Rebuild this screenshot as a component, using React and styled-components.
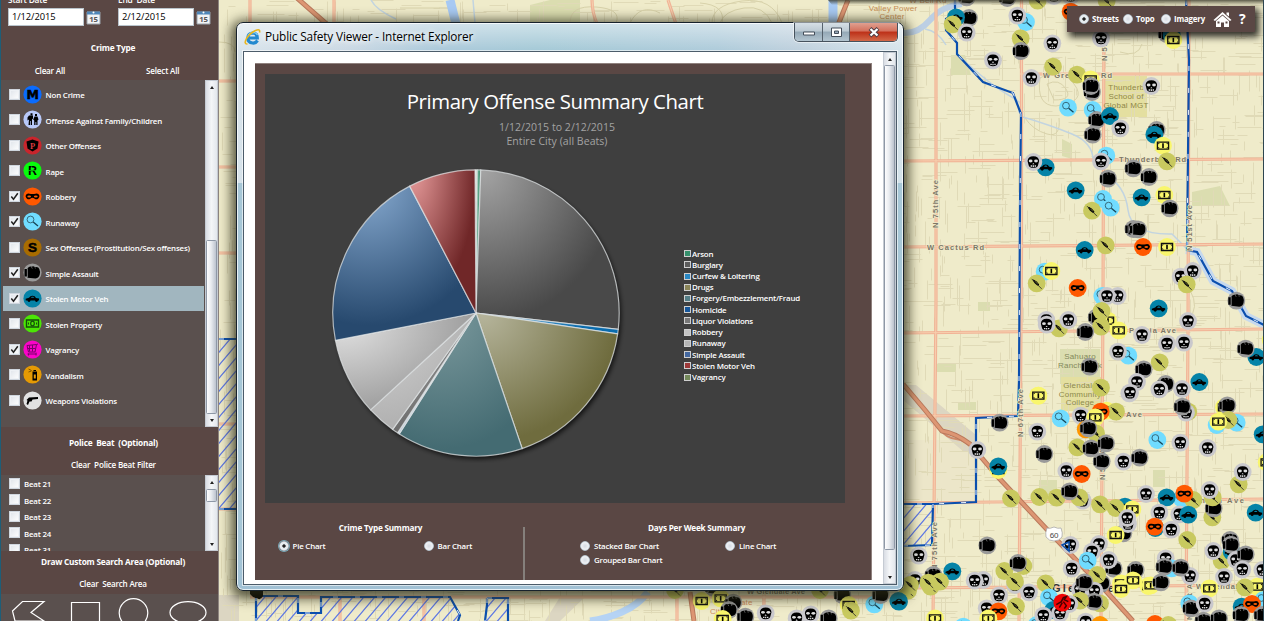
import React from "react";
import styled, { createGlobalStyle, css } from "styled-components";

const Global = createGlobalStyle`
  * { box-sizing: border-box; }
  body { margin: 0; background: #efebca; overflow: hidden; }
`;

const ui = `"Open Sans", "Noto Sans", sans-serif`;
const brown = "#5a4744";
const slate = "#5a504e";

const Screen = styled.div`
  position: relative;
  width: 1264px;
  height: 621px;
  overflow: hidden;
  font: 600 7.9px/12px ${ui};
  letter-spacing: -0.2px;
  color: #fff;
  white-space: pre;
`;
const MapLayer = styled.svg`
  position: absolute;
  inset: 0;
  width: 1264px;
  height: 621px;
`;

/* ---------- sidebar ---------- */
const Sidebar = styled.aside`
  position: relative;
  display: flex;
  flex-direction: column;
  width: 219px;
  height: 621px;
  background: ${brown};
  border-left: 1px solid #1d5e78;
  border-right: 1px solid #8d8580;
`;
const DateRow = styled.div`
  display: flex;
  height: 32px;
  padding-left: 7px;
  gap: 17px;
`;
const DateField = styled.div`
  width: 93px;
`;
const DateLabel = styled.div`
  height: 8px;
  line-height: 12px;
  margin-top: -6px;
  margin-bottom: 6px;
  font-size: 8.4px;
`;
const DateLine = styled.div`
  display: flex;
  align-items: center;
  gap: 2px;
`;
const DateInput = styled.div`
  width: 76px;
  height: 18px;
  padding-left: 3px;
  background: #fff;
  border: 1px solid #b9c4cc;
  color: #000;
  font: 400 9.4px/16px ${ui};
  letter-spacing: -0.1px;
`;
const Heading = styled.div`
  text-align: center;
  font-weight: 700;
  font-size: 8.3px;
  letter-spacing: -0.22px;
  padding-left: ${(p) => p.$shift || 7}px;
  height: ${(p) => p.$h}px;
  line-height: ${(p) => p.$h}px;
`;
const Actions = styled.div`
  display: flex;
  justify-content: center;
  gap: ${(p) => p.$gap || 0}px;
  height: 16px;
  line-height: ${(p) => p.$lh || 14}px;
  padding-right: ${(p) => p.$pull || 0}px;
  padding-left: ${(p) => p.$shift || 0}px;
  font-size: 8.1px;
`;
const DrawActions = styled(Actions)`
  height: 21px;
`;
const ListBox = styled.div`
  display: flex;
  flex: none;
  height: ${(p) => p.$h}px;
  background: ${slate};
`;
const Items = styled.div`
  flex: 1;
  overflow: hidden;
  padding-top: ${(p) => p.$top}px;
  padding-left: 2px;
`;
const Row = styled.div`
  display: flex;
  align-items: center;
  height: ${(p) => (p.$small ? 16.5 : 25.5)}px;
  margin-right: 1px;
  padding-left: 6px;
  gap: ${(p) => (p.$small ? 4 : 3.3)}px;
  ${(p) => p.$selected && css`background: #a1b6bf;`}
`;
const RowLabel = styled.span`
  padding-top: 1.5px;
`;
const Check = styled.span`
  width: 11px;
  height: 11px;
  flex: none;
  background: linear-gradient(135deg, #dfe4ea, #fff);
  border: 1px solid #cfd6de;
  box-shadow: inset 0 0 0 1px #eef1f5;
  display: flex;
  svg { width: 9px; height: 9px; }
`;
const RowIcon = styled.svg`
  width: 19px;
  height: 19px;
  flex: none;
`;
const Scroll = styled.div`
  width: 13px;
  flex: none;
  display: flex;
  flex-direction: column;
  background: linear-gradient(90deg, #d9dde4, #f4f6f8 50%, #e3e7ec);
  border: 1px solid #c5cbd3;
`;
const Arrow = styled.div`
  height: 12px;
  flex: none;
  display: flex;
  align-items: center;
  justify-content: center;
  &::before {
    content: "";
    border: 2.5px solid transparent;
    border-top-width: ${(p) => (p.$up ? 0 : 3)}px;
    border-bottom-width: ${(p) => (p.$up ? 3 : 0)}px;
    border-${(p) => (p.$up ? "bottom" : "top")}-color: #222;
  }
`;
const Thumb = styled.div`
  height: ${(p) => p.$h}px;
  margin-top: ${(p) => p.$top}px;
  margin-bottom: auto;
  background: linear-gradient(90deg, #fdfdfe, #e9ecf0 45%, #bcc3ce);
  border: 1px solid #8e98a6;
  border-radius: 1.5px;
`;
const DrawTools = styled.div`
  flex: 1;
  background: ${slate};
  overflow: hidden;
`;

/* ---------- dialog window ---------- */
const Win = styled.section`
  position: absolute;
  left: 236px;
  top: 22px;
  width: 668px;
  height: 569px;
  border: 1.5px solid #17222c;
  border-radius: 7px;
  padding: 0 6px 5px 6px;
  display: flex;
  flex-direction: column;
  background:
    linear-gradient(180deg, rgba(255,255,255,.5), rgba(255,255,255,.02) 30px),
    linear-gradient(180deg, transparent 0 160px, #a5c6d6 160px 500px, #9fc0d4),
    linear-gradient(90deg, #d6e2ea 0, #c7d6e2 110px, #a6c6d8 200px, #9fc6d4 300px, #a9c8d8 480px, #bacddb 560px, #d3e2ea);
  box-shadow: inset 0 0 0 1px rgba(255,255,255,.75), 0 3px 12px 5px rgba(40,40,20,.75);
`;
const TitleBar = styled.header`
  display: flex;
  height: 28px;
  padding-left: 1px;
  flex: none;
`;
const TitleText = styled.h1`
  margin: 0;
  padding-left: 4px;
  padding-top: 6px;
  flex: 1;
  font: 400 11.8px/14px ${ui};
  letter-spacing: -0.14px;
  color: #000;
  text-shadow: 0 0 6px #fff, 0 0 6px #fff;
`;
const WinButtons = styled.div`
  display: flex;
  height: 19px;
  margin-right: -1px;
  border: 1px solid #46525d;
  border-top: 0;
  border-radius: 0 0 5px 5px;
  overflow: hidden;
  box-shadow: 0 0 0 1px rgba(255,255,255,.5);
`;
const WinButton = styled.span`
  width: ${(p) => p.$w}px;
  display: flex;
  align-items: center;
  justify-content: center;
  border-right: 1px solid #56626d;
  background: linear-gradient(180deg, #d6dfe6, #bccad3 45%, #94a8b6 50%, #b3c5d0);
  &:last-child {
    border-right: 0;
    background: linear-gradient(180deg, #e0a090, #d4705c 45%, #bd3018 50%, #d26848);
  }
`;
const Client = styled.div`
  flex: 1;
  display: flex;
  min-height: 0;
  background: #fff;
  border: 1px solid #4c5c6a;
  box-shadow: 0 0 0 1px rgba(255,255,255,.6);
`;
const Page = styled.div`
  flex: 1;
  padding: 11px 11px 4px 11px;
`;
const Report = styled.div`
  height: 100%;
  padding: 9.500px 26px 0 10px;
  background: ${brown};
  border-top: 1px solid #8f817e;
  border-right: 1px solid #8f817e;
`;
const Chart = styled.div`
  height: 429px;
  background: #3f3f3f;
  padding-top: 12px;
`;
const ChartTitle = styled.h2`
  margin: 0;
  text-align: center;
  font: 400 20.4px/30px ${ui};
  letter-spacing: -0.42px;
`;
const ChartSub = styled.p`
  margin: 0;
  padding-top: 4px;
  padding-left: 4px;
  text-align: center;
  font: 400 10.5px/14px ${ui};
  letter-spacing: 0.05px;
  color: #a3a3a3;
`;
const ChartBody = styled.div`
  display: flex;
  align-items: flex-start;
`;
const Pie = styled.svg`
  width: 300px;
  height: 300px;
  margin: 15.500px 0 0 60.500px;
  flex: none;
`;
const Legend = styled.ul`
  list-style: none;
  margin: 100.500px 0 0 58px;
  padding: 0;
`;
const LegendItem = styled.li`
  display: flex;
  align-items: center;
  gap: 1.5px;
  height: 11.23px;
`;
const Swatch = styled.i`
  width: 7px;
  height: 7px;
  border: 1px solid #cfcfcf;
  background: ${(p) => p.$c};
`;
const Options = styled.div`
  display: flex;
  padding-top: 24px;
  height: 77px;
`;
const OptionGroup = styled.div`
  width: ${(p) => p.$w}px;
  padding-left: ${(p) => p.$pad}px;
  ${(p) => p.$line && css`border-right: 2px solid #85807c;`}
`;
const OptionTitle = styled.div`
  width: ${(p) => p.$w}px;
  text-align: center;
  font-weight: 700;
  font-size: 8.2px;
  letter-spacing: -0.22px;
  height: 12px;
  line-height: 2px;
`;
const OptionGrid = styled.div`
  display: grid;
  grid-template-columns: 145px 100px;
  grid-auto-rows: 14px;
`;
const RadioLabel = styled.span`
  display: flex;
  align-items: center;
  gap: ${(p) => p.$gap || 4}px;
`;
const Radio = styled.i`
  width: 10px;
  height: 10px;
  flex: none;
  border-radius: 50%;
  border: 1px solid #b9c5cf;
  background: ${(p) => (p.$on ? "radial-gradient(circle, #222 0 1.3px, #dfe6ea 2px, #fff)" : "radial-gradient(circle, #d5dae2, #fff)")};
  box-shadow: ${(p) => (p.$on && p.$ring ? "0 0 0 1px #78a9b8" : "none")};
`;

/* ---------- map toolbar ---------- */
const Toolbar = styled.nav`
  position: absolute;
  left: 1067px;
  top: 6px;
  width: 188px;
  height: 26px;
  padding-left: 12px;
  display: flex;
  align-items: center;
  background: ${brown};
  box-shadow: 3px 4px 7px 1px rgba(0,0,0,.8);
  font-weight: 700;
  > span { width: 44px; }
  > span:nth-child(2) { width: 38px; }
  > span:nth-child(3) { width: 52px; }
`;
const Help = styled.b`
  font: 700 14px/16px ${ui};
  padding-left: 7px;
`;

/* ---------- incident symbols ---------- */
const colours = {
  s: "#c9c8cc", a: "#999", d: "#c8c95f", c: "#0583a7", r: "#70dcff", m: "#f9f66c",
  o: "#ff5800", h: "#f00404", v: "#ff9500", M: "#0a6cff", F: "#b8c8f8", P: "#c9252c",
  R: "#08fb0c", S: "#a86c00", p: "#4be605", V: "#fa04c8", n: "#e59a04", w: "#e2e2e2",
};
const letter = { fontFamily: "Liberation Sans", fontWeight: 700, textAnchor: "middle" };
const glyphs = {
  s: <><path d="M-5.800 -1Q-5.500 -5.800 0 -5.800Q5.500 -5.800 5.800 -1L4.600 3.500Q4 5.800 0 5.800Q-4 5.800 -4.600 3.500Z" /><g fill="#dededf"><ellipse cx="-2.700" cy="-1" rx="1.900" ry="1.400" /><ellipse cx="2.700" cy="-1" rx="1.900" ry="1.400" /><path d="M0 1l1.100 1.300h-2.200zM-2.700 3.300h1.500v1.400h-1.500zM-.6 3.300h1.200v1.600h-1.200zM1.300 3.300h1.400v1.400h-1.400z" /></g></>,
  a: <><path d="M-8 -3.500h2.600v7.500h-2.600zM-5 -4Q-3.500 -6.500 -1 -5.800Q1 -7 2.500 -5.300Q6 -6 6.800 -3.500Q8 -1 7.200 2Q6.500 5.500 3 6L-5 5.200Z" /><path d="M-5.200-3.500v8M-1-5.500l.8 1.600M2.500-5l.4 1" stroke="#999" strokeWidth=".6" fill="none" /></>,
  d: <><path d="M-4 -3L-3.200 -3.800L0 -1.800L2.400 .8L2.100 2.200L.6 2.200L-2 0Z" /><path d="M-5 -4.500L5 5.500" stroke="#222" strokeWidth=".8" /><path d="M-1.500-2l2.600 2.600" stroke="#8d8e3c" strokeWidth=".6" /></>,
  c: <><path d="M-6.800 .3L-3.500 -.8Q-2 -3 0 -2.800Q2.500 -2.800 3.500 -.6L6.500 0V2H-6.800Z" /><circle cx="-3.500" cy="2" r="1.400" /><circle cx="4" cy="2" r="1.400" /><path d="M-1.600-.7l.8-1.100h1.600l1 1.100z" fill="#0583a7" /></>,
  r: <><circle cx="-2" cy="-2" r="3.400" fill="none" stroke="#305c6c" strokeWidth=".9" /><path d="M.7 .5L5.500 4.500" stroke="#164557" strokeWidth="1.300" /></>,
  m: <><path d="M-5.600 -3.500H5.600V3.500H-5.600Z" fill="none" stroke="#111" strokeWidth="1.300" /><path d="M-.8-2.300h1.600v4.600h-1.600zM-4.700-2.600h1.500l-1.500 1.500zM4.700 2.600h-1.500l1.500-1.500zM4.700-2.600v1.500l-1.500-1.500zM-4.700 2.600v-1.500l1.500 1.500z" /></>,
  o: <><path d="M-7 -.5Q-6 -3.500 -3 -2.800Q0 -2 3 -2.800Q6 -3.500 7 -.5Q6 3.300 3 2.800L1 1.500Q0 1 -1 1.500L-3 2.800Q-6 3.300 -7 -.5Z" /><g fill="#ff5800"><ellipse cx="-3.300" rx="1.900" ry="1.100" /><ellipse cx="3.300" rx="1.900" ry="1.100" /></g></>,
  h: <path d="M-6 2L-1 -1L1 -5L4 -6L2 -3L6 -1M1 -1L4 3L2 6M0 0L-3 5" fill="none" stroke="#400" strokeWidth="1.500" />,
  v: <path d="M-3-3h5v8h-5z" />,
  M: <text y="4.600" fontSize="12.500" stroke="#000" strokeWidth=".5" {...letter} style={{ fontFamily: "DejaVu Sans" }}>M</text>,
  F: <><path d="M-2-6.200h2v2h-2zM2.500-5.500h2v2h-2zM-3.500-4h4v3l-1 1v5.500h-1.300v-4h-.7v4h-1.500l.5-5.500l-1.500 1v-3zM2-3h3l1 3l-1 1v4.500h-1.200v-3h-.8v3h-1.300v-4.500l-1-1z" /></>,
  P: <><path d="M-6 -4L-3 -5L0 -6L3 -5L6 -4L5 3L0 6L-5 3Z" /><text y="3" fontSize="8.500" fill="#d63a3f" {...letter} style={{ fontFamily: "Liberation Serif" }}>P</text></>,
  R: <><text y="4.500" fontSize="12.500" {...letter}>R</text><path d="M-4 0h7M-1-4v3" stroke="#08fb0c" strokeWidth=".7" /></>,
  S: <text y="4.800" fontSize="13.500" stroke="#000" strokeWidth=".5" {...letter}>S</text>,
  p: <><path d="M-6 -3.500H6V3.500H-6Z" fill="none" stroke="#14500a" strokeWidth="1.400" /><ellipse rx="1.800" ry="2.300" fill="none" stroke="#14500a" strokeWidth="1.200" /><path d="M-4.500 0h1M3.500 0h1" stroke="#14500a" strokeWidth="2" /></>,
  V: <path d="M-5.500 -4L4 -5L5.500 -5.500M4 -5L2.500 2.500H-4L-5.500 -4M-3 -4V2M0 -4.500V2M-5 -1H3M-5 4.500H4M-4 4v2M3.500 3v3" fill="none" stroke="#78006a" strokeWidth="1" />,
  n: <><path d="M0-3h4.500v9h-4.500zM1-4.500h2.500v1h-2.500z" /><path d="M1.300 0h2v4h-2z" fill="#e59a04" /><path d="M-1-4l-3-1.500M-1-3.500l-3 1" stroke="#664400" strokeWidth=".8" /></>,
  w: <path d="M-6 -.5L-3.500 -3L5.500 -3.500V-1.500L0 -1L-1 1L-3 1L-4.500 4.500L-6 3.500L-5 0Z" />,
};
const Pin = ({ t, x = 0, y = 0, r = 8.9 }) => (
  <g transform={`translate(${x} ${y})`}>
    <circle r={r} fill={colours[t]} />
    {glyphs[t]}
  </g>
);

/* Each sheet lists incidents as kind,x,y in thirds of a pixel from its origin. */
const sheets = [
  [900, 0, "a200,-8 a322,-6 d413,2 s462,-12 s512,-12 d620,3 o512,35 a207,54 c168,52 d158,73 s200,98 r378,66 s352,47 d362,115 a363,153 s457,130 s279,181 s603,115 s394,234 d459,200 d531,224 m572,238 a576,276 a573,258 s754,258 r504,323 r578,330 a590,360 c630,348 s661,385 a578,404 a770,390 c763,404 m789,437 d801,484 r619,467 s603,484 c437,502 s400,486 a700,505 a624,536 a747,531 c527,571 c725,592 m793,585 r609,597 r632,623 d576,632 a809,625 a800,102 c815,105 m820,120"],
  [900, 200, "a700,87 a714,88 o729,141 m801,141 c554,150 d617,136 r434,215 m454,213 d410,250 o533,264 r607,288 s653,288 s621,288 s842,230 s878,213 d860,253 a1009,302 c776,325 a590,352 m624,362 d605,333 d603,380 m656,391 s439,360 d477,385 s440,374 s505,360 a556,396 s726,405 s864,363 s801,431 s852,428 r685,467 s654,455 a569,500 d779,487 a731,508 s711,546 s688,580 a797,552 s778,568 s846,567 c898,546 m1112,420 c1069,471 a1037,446 d603,563 m415,587"],
  [900, 400, "m415,-13 s690,-22 r482,55 s542,47 m620,32 d648,35 o602,35 m586,52 v557,88 d588,100 a565,85 s412,95 a299,68 s232,150 m295,210 c295,199 d532,142 a573,145 a618,130 a605,184 s670,185 a719,173 a433,162 r772,120 s841,128 s923,144 d865,35 s858,38 a847,20 m972,22 a982,16 r1010,68 r950,75 d985,60 m955,65 c1088,103 m1100,187 d1016,253 s1028,216 s499,213 o545,222 d333,295 d418,291 d470,293 s548,302 d538,292 a509,274 d600,313 c675,320 d647,324 m697,328 a670,400 s684,372 s682,354 m647,405 s738,282 r845,295 d880,300 c800,292 o853,281 s778,338 s838,343 c865,344 c766,384 o764,380 s814,389 d862,420 d937,352 a941,325 d938,292 s929,270 c1067,338 a262,436 s56,467 c157,514 a100,525 s45,540 d92,560 d85,548 d120,545 s250,540 s224,542 d24,572 c-5,603 d313,513 d370,498 a354,489 s345,555 d345,545 d437,550 s387,577 s297,586 s260,625 o295,634 d348,619 s511,435 s597,432 s576,455 r563,482 s515,506 a641,506 s626,480 a707,510 m663,550 m699,541 m663,567 a605,550 d592,525 s583,572 s540,568 a553,547 d600,610 a582,605 d540,602 s508,612 r447,592 c460,630 s480,640 h487,608 r410,675 s430,647 s557,665 v600,675 m265,655 m105,655 r190,680 m745,558 m752,556 a783,547 s797,475 r815,505 a793,500 s870,528 a842,503 d965,483 c995,455 a990,420 a993,434 s1008,480 a1037,463 s940,453 s1027,508 s972,531 s1087,510 m928,565 m1072,560 d1035,562 r868,610 a873,625 s914,611 c1025,620 r1090,600 o1056,612 a1023,645 a910,662 a957,655 a1087,645 o765,672 d805,675"],
  [560, 490, "d345,300 d780,300 a460,293 m425,333 m482,325 a520,338 a507,360 m488,387 a556,380 s617,370 s710,385 s752,373 a806,385 a847,315 m866,345 d873,362 r943,343 a962,315 c1017,335 d1050,285"],
];
const pins = sheets.flatMap(([ox, oy, list]) =>
  list.split(" ").map((p) => {
    const [x, y] = p.slice(1).split(",").map(Number);
    return { t: p[0], x: ox + x / 3, y: oy + y / 3 };
  })
);

const minorStreets = (() => {
  let seed = 11;
  const rnd = () => (seed = (seed * 16807) % 2147483647) / 2147483647;
  let d = "";
  for (let x = 220; x < 1264; x += 21)
    for (let y = 0; y < 621; y += 21) {
      const n = 2 + Math.floor(rnd() * 3);
      for (let i = 0; i < n; i++) {
        const a = x + Math.round(rnd() * 18) + 0.5;
        const b = y + Math.round(rnd() * 18) + 0.5;
        const l = Math.round(6 + rnd() * 22);
        d += rnd() > 0.48 ? `M${a} ${b}h${l}` : `M${a} ${b}v${l}`;
      }
    }
  return d;
})();
const majors = "M936 0L936 300L933 621M1021.500 0V250L1019 621M1104 0L1103 300L1101 621M1189 0L1188 330L1186 621M1020 74H1264M903 161L1264 159M903 247L1264 244M903 333L1264 329M903 416L1264 414M903 503L1264 499M903 588L1264 585M219 81H237M219 167H237M219 253H237M219 424H237M250 0V23M334 0V23M592 0Q592 12 597 24M668 0L676 24M250 597H903M340 597V621M424 597V621M677 592V621M764 592V621M219 509H237";
const freeway = "M903 384L925 410L942 431Q955 433 970 444L998 477L1054 537L1105 590L1133 621M297 -2L330 27M848 0L838 25M690 592L694 621";
const freewayLoop = "M940 429Q946 438 956 439T974 451";
const beatLine = "M955 0V14L946 19V30L957 43V54L983 82L1013 93L1021 114L1020 205L1019 380L1018 416L976 418V502L933 504H903M1186 0L1189 60L1187 250L1197 252L1213 281L1232 291L1246 316L1264 325M256 596H298V613H321V597H450L460 615L458 621M487 598H508V621M487 598V605L485 621M256 596V621M219 339H237M219 509H237M903 546L932 545L933 504";

const labels = [
  [1043, 78, "W Greenway Rd", 69], [1119, 162, "Thunderbird Rd", 67], [927, 250, "W Cactus Rd", 57],
  [1129, 333, "Peoria Ave", 47], [1126, 417, "Ave", 16], [1178, 503, "Northern Ave", 66], [1196, 589, "W Glendale Ave", 64],
  [747, 594, "W Glendale Ave", 58],
];
const vertLabels = [[938, 228, "N 75th Ave", 48], [1023, 437, "N 67th Ave", 48], [1192, 251, "N 51st Ave", 46], [937, 570, "N 75th Ave", 48], [1107, 61, "N 59th Ave", 47], [1105, 480, "N 59th Ave", 40], [1192, 620, "N 51st Ave", 46]];
const areaLabels = [
  [1131, 90, "Thunderbird", "#8f8748"], [1126, 99, "School of", "#8f8748"], [1126, 108, "Global MGT", "#8f8748"],
  [1080, 359, "Sahuaro", "#82895a"], [1080, 368, "Ranch Park", "#82895a"],
  [1080, 388, "Glendale", "#8b894c"], [1080, 397, "Community", "#8b894c"], [1080, 405, "College", "#8b894c"],
  [928, 3, "W Bell Rd", "#c48a58"], [893, 11, "Valley Power", "#c88f56"], [892, 19, "Center", "#c88f56"],
  [735, 605, "Westgate", "#d08c5c"], [731, 614, "City Center", "#d08c5c"],
];

function CityMap() {
  return (
    <MapLayer viewBox="0 0 1264 621">
      <defs>
        <pattern id="hatch" width="11" height="13" patternUnits="userSpaceOnUse">
          <path d="M0 13L11 0M-5.500 6.500L5.500 -6.500M5.500 19.500L16.500 6.500" stroke="#5e78e4" strokeWidth="1.200" />
        </pattern>
        <linearGradient id="topShade" x1="0" y1="0" x2="0" y2="1">
          <stop offset="0" stopColor="#3a3a2c" stopOpacity=".8" /><stop offset="1" stopColor="#3a3a2c" stopOpacity="0" />
        </linearGradient>
      </defs>
      <path fill="#efebca" d="M0 0H1264V621H0Z" />
      <path d="M903 440H976V500H903Z" fill="#ece6c9" />
      <path d="M951 55l14 0l6 20l-20 0zM530 5l20-5l30 0v23h-50zM1062 139l10 5v15l-10-3zM1192 192l28-6l10 20h-38zM1060 349h40v35h-40zM1039 480h18v15h-18zM1153 470h12v17h-12zM936 364h20v8h-20zM978 302h12v9h-12zM958 402h18v8h-18z" fill="#dbddb0" />
      <path d="M1103 76H1147V117H1110Q1103 110 1103 76ZM1061 377H1101V411H1061Z" fill="#e4dfa0" />
      <path d="M219 595h20v26h-20zM560 597l25 0l-25 24h-15zM903 385h13l60 50v17h-12L903 400z" fill="#dcd6c2" />
      <path d={minorStreets} stroke="#e0dab7" fill="none" />
      <path d="M1040 78q20-12 34 6t-18 22q-20 0-16-28M1047 84q12-6 19 5t-12 11zM400 8h40M1025 118q8 12 22 16t12-16M1120 52q18 6 22-8M700 3q26 2 22 20M712 23q0-18 30-22t40 22M720 23q4-12 24-15t28 15M570 23q0-18 26-16t20 16M630 23q10-20 30-10M219 42q16 0 16 10M1190 290q10 18-2 30" stroke="#d8d2aa" fill="none" />
      <path d="M903 33Q918 34 930 20T962 4" stroke="#bccfe4" strokeWidth="6" fill="none" />
      <path d="M450 0L456 24M833 0L833 25" stroke="#a7c9f3" strokeWidth="9" fill="none" />
      <path d="M648 592Q638 605 622 612T590 621" stroke="#b5d3f4" strokeWidth="7" fill="none" />
      <path d="M371 0Q376 10 396 19M473 0l2 23M925 29Q938 31 946 45M1023 117Q1050 125 1072 134T1093 162M1105 175Q1125 185 1128 210T1172 234L1188 250M958 55Q990 85 1010 96T1018 112" stroke="#c2d4e0" strokeWidth="1.500" fill="none" />
      <path d="M1186 250L1197 252L1213 281L1232 291L1246 316L1264 325" stroke="#c6d9ee" strokeWidth="8" fill="none" />
      <path d={majors} stroke="#f1b396" strokeWidth="3.200" fill="none" />
      <path d={majors} stroke="#f6cfae" strokeWidth="1" fill="none" />
      <path d={freewayLoop} stroke="#cf8a69" strokeWidth="2" fill="none" />
      <path d={freeway} stroke="#b9795c" strokeWidth="5" fill="none" />
      <path d={freeway} stroke="#dd9673" strokeWidth="3" fill="none" />
      <path d="M219 339H237V509H219ZM903 504H933V545H903ZM256 596H298V613H321V597H450L460 615V621H256ZM487 598H508V621H486Z" fill="url(#hatch)" />
      <path d={beatLine} stroke="#0b4fae" strokeWidth="2.200" fill="none" />
      <path d={beatLine} stroke="#e6f1ff" strokeWidth="1" strokeDasharray="5 17" fill="none" />
      <g fontFamily="Liberation Sans" fontSize="7.500" fontWeight="700" fill="#7d7666" stroke="#efebca" strokeWidth="1.500" paintOrder="stroke" letterSpacing="0">
        {labels.map(([x, y, s, w]) => <text key={s + x} x={x} y={y} textLength={w}>{s}</text>)}
        {vertLabels.map(([x, y, s, w]) => <text key={s + x + y} transform={`translate(${x} ${y}) rotate(-90)`} textLength={w}>{s}</text>)}
      </g>
      <g fontFamily="Liberation Sans" fontSize="8" fontWeight="400" textAnchor="middle" letterSpacing=".2">
        {areaLabels.map(([x, y, s, c]) => <text key={s} x={x} y={y} fill={c}>{s}</text>)}
      </g>
      <text x="1052" y="592" fontFamily="Liberation Sans" fontSize="11" fontWeight="700" fill="#333" textLength="62">Glendale</text>
      <path d="M1047 528q3 1 7-1q4 2 7 1q2 5 1 9q-3 4-8 4t-8-4q-1-4 1-9z" fill="#fff" stroke="#aaa" strokeWidth=".8" />
      <text x="1054" y="537.500" fontFamily="Liberation Sans" fontSize="8" fontWeight="400" fill="#444" textAnchor="middle">60</text>
      {pins.map((p, i) => <Pin key={i} {...p} />)}
      <path d="M250 591h13v5q-3 5-6 2q-4 0-7-4z" />
      <path d="M1062 545l7-3v9z" fill="none" stroke="#0b4fae" strokeWidth="1.500" />
      <path d="M828 0H1264V5H832Z" fill="url(#topShade)" />
      <path d="M1263.500 0V621" stroke="#2e4650" />
    </MapLayer>
  );
}

const Calendar = () => (
  <svg width="15" height="15" viewBox="0 0 15 15">
    <path d="M1 2H14V14H1Z" fill="#f2f4f6" stroke="#9aa3ab" />
    <path d="M1 1.500H14V4.500H1Z" fill="#4f86b8" /><circle cx="7.500" cy="2.500" r="1" fill="#fff" />
    <text x="7.500" y="12.300" fontFamily="Open Sans" fontSize="7.800" fontWeight="700" textAnchor="middle" fill="#555">15</text>
  </svg>
);
const Tick = () => <svg viewBox="0 0 9 9"><path d="M1.300 4.500L3.500 7.300L7.800 1.200" fill="none" stroke="#222" strokeWidth="1.500" /></svg>;

const crimes = [
  ["M", "Non Crime"], ["F", "Offense Against Family/Children"], ["P", "Other Offenses"], ["R", "Rape"],
  ["o", "Robbery", 1], ["r", "Runaway", 1], ["S", "Sex Offenses (Prostitution/Sex offenses)"],
  ["a", "Simple Assault", 1], ["c", "Stolen Motor Veh", 1, 1], ["p", "Stolen Property"],
  ["V", "Vagrancy", 1], ["n", "Vandalism"], ["w", "Weapons Violations"],
];

/* name, end angle, light, dark, legend swatch */
const slices = [
  ["Vagrancy", 0.5, "#e8efe4", "#c9d4c0", "#74895a"],
  ["Arson", 1.9, "#7cc4a4", "#3e8468", "#35906c"],
  ["Burglary", 96.6, "#a4a4a4", "#494949", "#5c5c5c"],
  ["Curfew & Loitering", 98.4, "#8fc4e4", "#0a6cae", "#2a88c4"],
  ["Drugs", 161.2, "#b6b59c", "#6f6c3e", "#8a8558"],
  ["Forgery/Embezzlement/Fraud", 212.4, "#7c9a9e", "#446b72", "#557f88"],
  ["Homicide", 213.2, "#e6edf4", "#b9c9d8", "#16569a"],
  ["Liquor Violations", 215.6, "#aaa", "#6e6e6e", "#777"],
  ["Robbery", 227.4, "#d6d6d6", "#b2b2b2", "#c4c4c4"],
  ["Runaway", 259, "#e2e2e2", "#9c9c9c", "#b5b5b5"],
  ["Simple Assault", 332.4, "#86a9cf", "#27496e", "#4468a0"],
  ["Stolen Motor Veh", 359.6, "#e89c9c", "#702728", "#9c3838"],
];
const legendOrder = [...slices.slice(1), slices[0]];
const pt = (deg) => {
  const a = (deg * Math.PI) / 180;
  return `${(150 + 143.2 * Math.sin(a)).toFixed(2)} ${(150 - 143.2 * Math.cos(a)).toFixed(2)}`;
};

function PieChart() {
  return (
    <Pie viewBox="0 0 300 300">
      <defs>
        <filter id="drop" x="-10%" y="-10%" width="120%" height="120%"><feDropShadow dx="2" dy="3" stdDeviation="2.500" floodColor="#000" floodOpacity=".75" /></filter>
        {slices.map(([n, , l, d], i) => (
          <radialGradient key={n} id={`slice${i}`} cx={i === 10 ? ".25" : i === 5 ? ".35" : ".05"} cy={i === 9 ? ".1" : "0"} r={i === 10 ? ".95" : "1"}>
            <stop offset="0" stopColor={l} /><stop offset=".95" stopColor={d} />
          </radialGradient>
        ))}
      </defs>
      <circle cx="150" cy="150" r="143" fill="#555" filter="url(#drop)" />
      {slices.map(([n, end], i) => {
        const start = i ? slices[i - 1][1] : -0.4;
        return <path key={n} d={`M150 150L${pt(start)}A143.200 143.200 0 0 1 ${pt(end)}Z`} fill={`url(#slice${i})`} stroke="rgba(225,228,230,.72)" strokeWidth="1.200" strokeLinejoin="round" />;
      })}
    </Pie>
  );
}

export default function App() {
  return (
    <Screen>
      <Global />
      <CityMap />
      <Sidebar>
        <DateRow>
          {[["Start Date", "1/12/2015"], ["End  Date", "2/12/2015"]].map(([l, v]) => (
            <DateField key={l}>
              <DateLabel>{l}</DateLabel>
              <DateLine><DateInput>{v}</DateInput><Calendar /></DateLine>
            </DateField>
          ))}
        </DateRow>
        <Heading $h={32}>Crime Type</Heading>
        <Actions $gap={81} $pull={5}><span>Clear All</span><span>Select All</span></Actions>
        <ListBox $h={347}>
          <Items $top={1.5}>
            {crimes.map(([g, name, on, sel]) => (
              <Row key={name} $selected={sel}>
                <Check>{on && <Tick />}</Check>
                <RowIcon viewBox="-9.500 -9.500 19 19"><Pin t={g} r={9.1} /></RowIcon>
                <RowLabel>{name}</RowLabel>
              </Row>
            ))}
          </Items>
          <Scroll><Arrow $up /><Thumb $top={147} $h={174} /><Arrow /></Scroll>
        </ListBox>
        <Heading $h={32} $shift={8}>Police  Beat  (Optional)</Heading>
        <Actions $lh={12} $shift={8}>Clear  Police Beat Filter</Actions>
        <ListBox $h={76}>
          <Items $top={0}>
            {[21, 22, 23, 24, 31].map((n) => (
              <Row key={n} $small><Check /><RowLabel>Beat {n}</RowLabel></Row>
            ))}
          </Items>
          <Scroll><Arrow $up /><Thumb $top={1} $h={13} /><Arrow /></Scroll>
        </ListBox>
        <Heading $h={22} $shift={7}>Draw Custom Search Area (Optional)</Heading>
        <DrawActions $lh={21} $shift={7}>Clear  Search Area</DrawActions>
        <DrawTools>
          <svg width="217" height="27" fill="none" stroke="#fff" strokeWidth="1.200">
            <path d="M43 7.500H21.500L11.500 17L14 27H43L30 18.500ZM70.500 8.500H98.500V36H70.500Z" />
            <circle cx="132.500" cy="19" r="14.300" />
            <ellipse cx="187" cy="18.500" rx="18" ry="10.800" />
          </svg>
        </DrawTools>
      </Sidebar>

      <Win>
        <TitleBar>
          <svg width="17" height="28" viewBox="0 0 17 28">
            <path d="M13.500 17.500Q11.500 20.500 8.500 20Q3.800 19.500 3.800 15Q4 10 8.800 10Q13.300 10.300 13.300 15H5.500" fill="none" stroke="#2389cf" strokeWidth="3.200" />
            <path d="M4 13Q5 9.500 9 9.300Q12 9.300 13.500 12" fill="none" stroke="#8fd4f5" strokeWidth="1.200" />
            <path d="M15.500 9.500Q16.500 5.500 11.500 7.500Q6 10 2.500 15.500Q-.5 21.500 3.500 21" fill="none" stroke="#eab61c" strokeWidth="1.600" />
          </svg>
          <TitleText>Public Safety Viewer - Internet Explorer</TitleText>
          <WinButtons>
            <WinButton $w={28}><svg width="14" height="8"><path d="M1.500 4h11v3h-11z" fill="#fff" stroke="#444e5a" /></svg></WinButton>
            <WinButton $w={27}><svg width="13" height="11"><path d="M1.500 1h10v8.500h-10z" fill="#fff" stroke="#444e5a" /><path d="M4.500 4h4v2.500h-4z" fill="#9ab" stroke="#444e5a" /></svg></WinButton>
            <WinButton $w={47}><svg width="12" height="11"><path d="M2 1.500L10 9M10 1.500L2 9" stroke="#4b3b43" strokeWidth="4" /><path d="M2.500 2L9.500 8.500M9.500 2L2.500 8.500" stroke="#fff" strokeWidth="2.300" /></svg></WinButton>
          </WinButtons>
        </TitleBar>
        <Client>
          <Page>
            <Report>
              <Chart>
                <ChartTitle>Primary Offense Summary Chart</ChartTitle>
                <ChartSub>1/12/2015 to 2/12/2015{"\n"}Entire City (all Beats)</ChartSub>
                <ChartBody>
                  <PieChart />
                  <Legend>
                    {legendOrder.map(([n, , , , c]) => <LegendItem key={n}><Swatch $c={c} />{n}</LegendItem>)}
                  </Legend>
                </ChartBody>
              </Chart>
              <Options>
                <OptionGroup $w={260} $pad={13.5} $line>
                  <OptionTitle $w={204}>Crime Type Summary</OptionTitle>
                  <OptionGrid>
                    <RadioLabel><Radio $on $ring />Pie Chart</RadioLabel>
                    <RadioLabel><Radio />Bar Chart</RadioLabel>
                  </OptionGrid>
                </OptionGroup>
                <OptionGroup $w={300} $pad={55}>
                  <OptionTitle $w={233}>Days Per Week Summary</OptionTitle>
                  <OptionGrid>
                    <RadioLabel><Radio />Stacked Bar Chart</RadioLabel>
                    <RadioLabel><Radio />Line Chart</RadioLabel>
                    <RadioLabel><Radio />Grouped Bar Chart</RadioLabel>
                  </OptionGrid>
                </OptionGroup>
              </Options>
            </Report>
          </Page>
          <Scroll><Arrow $up /><Thumb $top={0} $h={485} /><Arrow /></Scroll>
        </Client>
      </Win>

      <Toolbar>
        <RadioLabel $gap={3}><Radio $on />Streets</RadioLabel>
        <RadioLabel $gap={3}><Radio />Topo</RadioLabel>
        <RadioLabel $gap={3}><Radio />Imagery</RadioLabel>
        <svg width="19" height="17" viewBox="0 0 19 17" fill="#fff">
          <path d="M9.500 1L18.500 9L17 10L9.500 3.500L2 10L.5 9ZM13.500 1.500h2.500v4l-2.500-2zM3 10L9.500 4.500L16 10V16H11V11.500H8V16H3Z" />
          <path d="M4.500 10.500h2v2h-2zM12.500 10.500h2v2h-2z" fill={brown} />
        </svg>
        <Help>?</Help>
      </Toolbar>
    </Screen>
  );
}
